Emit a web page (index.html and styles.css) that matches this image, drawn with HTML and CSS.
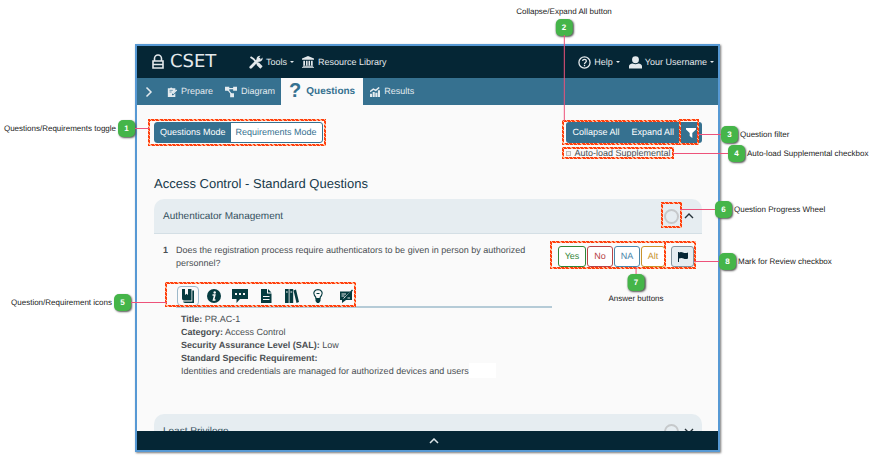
FILE: index.html
```html
<!DOCTYPE html>
<html lang="en">
<head>
<meta charset="utf-8">
<title>CSET Questions</title>
<link rel="stylesheet" href="styles.css">
</head>
<body>
<main class="guide">
  <div class="app">
    <header class="topbar">
      <a class="brand" href="#"><svg class="lock" viewBox="0 0 12 16"><path d="M2.500 7V4.500a3.500 3.500 0 0 1 7 0V7M1 7h10v7H1zM1 10.500h10" fill="none" stroke="currentColor" stroke-width="1.600"/></svg><span class="wordmark">CSET</span></a>
      <button class="menu"><svg class="icon14" viewBox="0 0 14 14"><path d="M1.500 2l3 2L12 12.500" fill="none" stroke="currentColor" stroke-width="1.800"/><path d="M8.500 8.500l4 4" stroke="currentColor" stroke-width="3.200"/><path d="M1.800 12.200L10 4" stroke="currentColor" stroke-width="2.800" stroke-linecap="round"/><path d="M13.500 2.500L11.500 4.500 9.700 2.700 11.500.7A3.500 3.500 0 0 0 7.700 5l1.500 1.700A3.500 3.500 0 0 0 13.500 2.500z" fill="currentColor"/></svg>Tools<i class="caret"></i></button>
      <a class="menu library" href="#"><svg class="icon12" viewBox="0 0 14 14"><path d="M7 0l7 3v1.500H0V3zM1.500 5.500h2V11h-2zM4.700 5.500h1.800V11H4.700zM7.600 5.500h1.800V11H7.600zM10.500 5.500h2V11h-2zM1 11.500h12v1H1zM0 13h14v1H0z" fill="currentColor"/></svg>Resource Library</a>
      <span class="spacer"></span>
      <button class="menu"><svg class="icon13" viewBox="0 0 14 14"><circle cx="7" cy="7" r="6" fill="none" stroke="currentColor" stroke-width="1.400"/><path d="M5 5.500C5 3 9 3 9 5.500 9 7 7 7 7 8.500M7 9.500V11" fill="none" stroke="currentColor" stroke-width="1.400"/></svg>Help<i class="caret"></i></button>
      <button class="menu user"><svg class="icon13" viewBox="0 0 14 14"><circle cx="7" cy="4" r="3.700" fill="currentColor"/><path d="M0 13.500V11q0-2.500 4-3 3 1.500 6 0 4 .5 4 3v2.500z" fill="currentColor"/></svg>Your Username<i class="caret"></i></button>
    </header>
    <nav class="tabs">
      <button class="drawer" aria-label="Open navigation"><svg viewBox="0 0 8 12"><path d="M1.500 1.500L6 6l-4.500 4.500" fill="none" stroke="currentColor" stroke-width="1.500"/></svg></button>
      <a class="tab prepare" href="#"><svg class="icon10" viewBox="0 0 12 12"><path d="M1 1.500h2.500Q5-.5 6.500 1.500H10v3L6 8.500V10h1.500L10 7.500V12H1z" fill="currentColor"/><path d="M7 8l4.500-4.500" stroke="currentColor" stroke-width="1.800"/><path d="M3 4h4M3 6h2.500" stroke="#367190" stroke-width=".8"/></svg>Prepare</a>
      <a class="tab diagram" href="#"><svg class="icon12" viewBox="0 0 14 12"><path d="M0 0h5v4.500H0zM9.500 0H14v4.500H9.500zM6 7.500h4.500V12H6z" fill="currentColor"/><path d="M3 2h8M3 3l5 6" stroke="currentColor" stroke-width="1.400"/></svg>Diagram</a>
      <a class="tab current" href="#"><b class="qmark">?</b>Questions</a>
      <a class="tab results" href="#"><svg class="icon10" viewBox="0 0 12 12"><path d="M0 8h2.500v4H0zM3.200 6h2.500v6H3.200zM6.400 7h2.500v5H6.400zM9.500 4H12v8H9.500z" fill="currentColor"/><path d="M0 5.500l4-3 3 1.500L11 .5" fill="none" stroke="currentColor" stroke-width="1.700"/></svg>Results</a>
    </nav>
    <section class="content">
      <div class="tools">
        <div class="modes"><button class="mode on">Questions Mode</button><button class="mode">Requirements Mode</button></div>
        <div class="view">
          <div class="actions"><button>Collapse All</button><button>Expand All</button><button class="filter" aria-label="Filter questions"><svg viewBox="0 0 10 10"><path d="M0 0h10v1.500L6.300 5v5L3.700 8V5L0 1.500z" fill="currentColor"/></svg></button></div>
          <label class="auto"><input type="checkbox">Auto-load Supplemental</label>
        </div>
      </div>
      <h1>Access Control - Standard Questions</h1>
      <article class="group">
        <h2 class="grouphead"><span>Authenticator Management</span><i class="wheel"></i><svg class="chev" viewBox="0 0 10 6"><path d="M1 5l4-4 4 4" fill="none" stroke="currentColor" stroke-width="1.400"/></svg></h2>
        <div class="question">
          <span class="num">1</span>
          <div class="body">
            <p class="ask">Does the registration process require authenticators to be given in person by authorized personnel?</p>
            <div class="extras">
              <button class="extra chosen" aria-label="Reference"><svg viewBox="0 0 14 14"><path d="M1 0h3v6l1.500-1.300L7 6V0h3.500v11.500H3q-2 0-2-2zM11.300 1.500H13V14H4.500Q2.500 14 2 12.500h9.300z" fill="currentColor"/></svg></button>
              <button class="extra" aria-label="Information"><svg viewBox="0 0 14 14"><circle cx="7" cy="7" r="7" fill="currentColor"/><circle cx="7.700" cy="3.500" r="1.200" fill="#fafafa"/><path d="M5.500 6h2.300L6.500 11H8.500" fill="none" stroke="#fafafa" stroke-width="1.600"/></svg></button>
              <button class="extra wide" aria-label="Comments"><svg viewBox="0 0 16 14"><path d="M0 0h16v10H8l-3.500 4v-4H0z" fill="currentColor"/><path d="M3 4h2v2H3zM7 4h2v2H7zM11 4h2v2h-2z" fill="#fafafa"/></svg></button>
              <button class="extra" aria-label="Documents"><svg viewBox="0 0 14 14"><path d="M2 0h6v4.500h4.500V14H2zM9 0l3.500 3.500H9z" fill="currentColor"/><path d="M4 7.500h6.500M4 10.500h6.500" stroke="#fafafa"/></svg></button>
              <button class="extra" aria-label="References"><svg viewBox="0 0 14 14"><path d="M0 0h3.700v14H0zM4.500 0h3.700v14H4.500zM8.500 1.500l2.500-1 3 12.500-2.500 1z" fill="currentColor"/><path d="M1 3h1.700M5.500 3h1.700" stroke="#fafafa"/></svg></button>
              <button class="extra" aria-label="Tips"><svg viewBox="0 0 14 14"><path d="M5 9.500Q5 8 3.500 6.500C1.500 3 4 .7 7 .7s5.500 2.300 3.500 5.800Q9 8 9 9.500zM5.500 4.500h3" fill="none" stroke="currentColor" stroke-width="1.200"/><path d="M4.500 9.500h5V12L8 14H6l-1.500-2z" fill="currentColor"/></svg></button>
              <button class="extra" aria-label="Feedback"><svg viewBox="0 0 14 14"><path d="M1 2.500h12V11H7l-4 3v-3H1z" fill="currentColor"/><path d="M2.500 5h4.500M2.500 7h3M4.500 9.500L12 2.500M8.500 9H11" stroke="#fafafa" stroke-width=".9"/><path d="M6 8.500L13 .5l1 1-7 7.500z" fill="currentColor"/></svg></button>
            </div>
            <div class="detail">
              <p><b>Title:</b> PR.AC-1</p>
              <p><b>Category:</b> Access Control</p>
              <p><b>Security Assurance Level (SAL):</b> Low</p>
              <p><b>Standard Specific Requirement:</b></p>
              <p class="last">Identities and credentials are managed for authorized devices and users</p>
            </div>
          </div>
          <div class="answers"><button class="yes">Yes</button><button class="no">No</button><button class="na">NA</button><button class="alt">Alt</button><button class="flag" aria-label="Mark for review"><svg viewBox="0 0 10 10"><path d="M0 0h1v10H0zM1 .5q2-1 4 0t5 0v6q-2.500 1-4.500 0T1 6.500z" fill="currentColor"/></svg></button></div>
        </div>
      </article>
      <article class="group">
        <h2 class="grouphead"><span>Least Privilege</span><i class="wheel"></i><svg class="chev" viewBox="0 0 10 6"><path d="M1 1l4 4 4-4" fill="none" stroke="currentColor" stroke-width="1.400"/></svg></h2>
      </article>
    </section>
    <footer class="bottom"><svg viewBox="0 0 10 6"><path d="M1 5l4-4 4 4" fill="none" stroke="currentColor" stroke-width="1.500"/></svg></footer>
  </div>

  <i class="mark m1"></i><i class="mark m2"></i><i class="mark m3"></i><i class="mark m4"></i>
  <i class="mark m5"></i><i class="mark m6"></i><i class="mark m7"></i><i class="mark m8"></i>
  <div class="note n1"><span>Questions/Requirements toggle</span><b>1</b><i></i></div>
  <div class="note n5"><span>Question/Requirement icons</span><b>5</b><i></i></div>
  <div class="note up n2"><span>Collapse/Expand All button</span><b>2</b><i></i></div>
  <div class="note n3"><i></i><b>3</b><span>Question filter</span></div>
  <div class="note n4"><i></i><b>4</b><span>Auto-load Supplemental checkbox</span></div>
  <div class="note n6"><i></i><b>6</b><span>Question Progress Wheel</span></div>
  <div class="note up n7"><i></i><b>7</b><span>Answer buttons</span></div>
  <div class="note n8"><i></i><b>8</b><span>Mark for Review checkbox</span></div>
</main>
</body>
</html>
```
FILE: styles.css
```css
* { box-sizing: border-box; }
body { margin: 0; background: #fff; font: 9px/13px "Liberation Sans", Arial, sans-serif; color: #4a4f53; text-rendering: geometricPrecision; }
button { font: inherit; color: inherit; background: none; border: 0; padding: 0; margin: 0; text-rendering: inherit; white-space: nowrap; }
a { color: inherit; text-decoration: none; }
h1, h2, p { margin: 0; font-weight: 400; }
svg { display: block; flex: none; }

.guide { position: relative; height: 100vh; min-height: 320px; padding: 44px 149px 5px 135px; overflow: hidden; }
.app { height: 100%; display: flex; flex-direction: column; border: 2px solid #5799d4; box-shadow: 1px 1px 2px #777; background: #fafafa; }

.topbar { flex: none; display: flex; align-items: center; height: 32px; padding: 0 4px 0 15px; background: #052635; color: #e4e9ec; }
.brand { display: flex; align-items: center; gap: 6px; width: 97px; }
.lock { width: 12px; height: 16px; }
.wordmark { font: 18px/18px "DejaVu Sans", sans-serif; }
.menu { display: flex; align-items: center; gap: 3px; font-size: 9px; white-space: nowrap; }
.library { margin-left: 8px; gap: 4px; }
.user { margin-left: 9px; }
.spacer { flex: 1; }
.caret { border: 2px solid transparent; border-top-color: currentColor; border-bottom: 0; }
.icon10 { width: 10px; height: 10px; }
.icon12 { width: 12px; height: 12px; }
.icon13 { width: 13px; height: 13px; }
.icon14 { width: 14px; height: 14px; }

.tabs { flex: none; display: flex; align-items: center; height: 27px; padding-left: 8px; background: #367190; color: #e4ebef; }
.drawer svg { width: 8px; height: 12px; }
.tab { display: flex; align-items: center; gap: 4px; font-size: 9px; }
.prepare { margin-left: 14px; }
.diagram { margin-left: 12px; }
.current { align-self: stretch; margin-left: 6px; padding: 0 8px; gap: 5px; background: #fafafa; color: #367190; font-size: 10px; font-weight: 700; }
.qmark { font-size: 20px; }
.results { margin-left: 7px; }

.content { flex: 1; min-height: 0; overflow: hidden; padding: 17px 16px 0 17px; }
.tools { display: flex; justify-content: space-between; align-items: flex-start; }
.modes { display: flex; border: 1px solid #367190; border-radius: 3px; background: #fff; }
.mode { height: 19px; padding: 0 5px; color: #367190; }
.mode.on { background: #367190; color: #fff; }
.actions { display: flex; border-radius: 3px; background: #367190; color: #fff; }
.actions button { height: 21px; padding: 0 6px; }
.filter svg { width: 10px; height: 10px; }
.auto { display: flex; align-items: center; gap: 3px; margin-top: 4px; }
.auto input { appearance: none; width: 5px; height: 5px; margin: 0; border: 1px solid #bbb; background: #eee; }
h1 { margin: 16px 0 7px; font-size: 13px; line-height: 16px; color: #17394a; }

.group { margin-bottom: 36px; }
.grouphead { display: flex; align-items: center; height: 35px; padding: 0 8px 0 9px; border-bottom: 1px solid #d4dfe5; border-radius: 10px 10px 0 0; background: #e6edf1; color: #34505e; font-size: 10px; }
.grouphead span { flex: 1; }
.wheel { width: 15px; height: 15px; border: 2px solid #c6c9cb; border-radius: 50%; }
.chev { width: 10px; height: 6px; margin-left: 5px; color: #263238; }
.question { display: flex; align-items: flex-start; padding: 10px 8px 0 9px; }
.num { width: 13px; font-weight: 700; }
.body { flex: 1; min-width: 0; }
.ask { max-width: 350px; }
.extras { display: flex; gap: 4px; margin-top: 16px; padding-left: 1px; border-bottom: 2px solid #b5cbd7; color: #063c40; }
.extra { display: grid; place-items: center; width: 22px; height: 20px; }
.extra svg { width: 14px; height: 14px; }
.extra.wide svg { width: 16px; }
.extra:last-child { margin-left: 2px; }
.extra.chosen { border: 1px solid #9db9ca; border-radius: 4px; }
.detail { padding: 5px 0 0 5px; }
.last { display: flex; }
.last::after { content: ""; width: 27px; height: 15px; margin-top: -2px; background: #fff; }
.answers { display: flex; margin: 2px 0 0 6px; gap: 1px; }
.answers button { width: 26px; height: 21px; border: 1px solid; border-radius: 3px; background: #fff; }
.answers .yes { width: 28px; color: #328639; }
.answers .no { color: #b64549; }
.answers .na { color: #4b87ab; }
.answers .alt { width: 24px; color: #c8932d; }
.answers .flag { display: grid; place-items: center; width: 23px; margin-left: 5px; border-color: #84949e; background: #e6edf1; color: #052635; }
.flag svg { width: 10px; height: 10px; }

.bottom { flex: none; display: grid; place-items: center; height: 19px; background: #052635; color: #dce4e8; }
.bottom svg { width: 10px; height: 6px; margin-left: 13px; }

/* Numbered call-outs laid over the application window */
.mark { position: absolute; border: 2px solid; border-image: repeating-linear-gradient(45deg, #ff3e0c 0 2px, #ffb896 2px 3px) 2; }
.m1 { left: 148px; top: 119px; width: 178px; height: 27px; }
.m2 { right: 188px; top: 120px; width: 119px; height: 25px; }
.m3 { right: 170px; top: 119px; width: 20px; height: 26px; }
.m4 { right: 195px; top: 147px; width: 112px; height: 12px; }
.m5 { left: 165px; top: 282px; width: 191px; height: 25px; }
.m6 { right: 187px; top: 202px; width: 21px; height: 26px; }
.m7 { right: 203px; top: 241px; width: 116px; height: 28px; }
.m8 { right: 173px; top: 241px; width: 32px; height: 28px; }
.note { position: absolute; display: flex; align-items: center; gap: 2px; color: #222; font: 8px/12px "Liberation Sans", Arial, sans-serif; white-space: nowrap; }
.note b { display: grid; place-items: center; width: 17px; height: 17px; border-radius: 5px; background: #45b549; box-shadow: 1px 1px 2px #555; color: #fff; }
.note i { width: 20px; height: 1px; margin: 0 -2px; background: #ed527a; }
.n1 { right: calc(100% - 148px); top: 120px; }
.n1 i { width: 15px; }
.n5 { right: calc(100% - 165px); top: 294px; }
.n5 i { width: 36px; }
.n3 { left: calc(100% - 170px); top: 126px; }
.n3 i { width: 24px; }
.n4 { left: calc(100% - 194px); top: 145px; }
.n4 i { width: 55px; }
.n6 { left: calc(100% - 187px); top: 201px; }
.n6 i { width: 35px; }
.n8 { left: calc(100% - 173px); top: 253px; }
.n8 i { width: 25px; }
.up { flex-direction: column; transform: translateX(50%); }
.up i { width: 1px; margin: -2px 0; }
.n2 { right: 305px; top: 6px; gap: 1px; }
.n2 i { height: 86px; }
.n7 { right: 233px; top: 269px; }
.n7 i { height: 7px; }
```
